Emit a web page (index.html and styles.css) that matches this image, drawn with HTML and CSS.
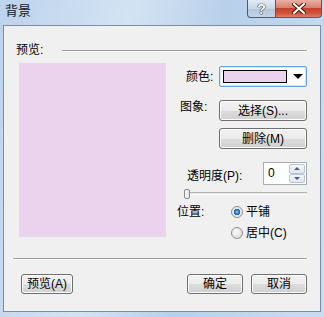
FILE: index.html
```html
<!doctype html>
<html lang="zh-CN">
<head>
    <meta charset="UTF-8">
    <title>背景</title>
    <link rel="stylesheet" href="styles.css">
</head>
<body>
    <div class="window">
        <div class="titlebar">
            <span class="title">背景</span>
            <div class="caption">
                <div class="cap help">?</div>
                <div class="cap close">
                    <svg width="14" height="11" viewBox="0 0 14 11">
                        <path d="M2 1 L12 10 M12 1 L2 10" stroke="#4a1a14" stroke-width="4" stroke-linecap="square"/>
                        <path d="M2 1 L12 10 M12 1 L2 10" stroke="#fff" stroke-width="2" stroke-linecap="square"/>
                    </svg>
                </div>
            </div>
        </div>

        <div class="client">
            <div class="group-head">
                <span class="group-label">预览:</span>
                <span class="rule"></span>
            </div>

            <div class="main">
                <div class="preview"></div>

                <div class="options">
                    <div class="row row-color">
                        <label class="lbl lbl-color">颜色:</label>
                        <div class="combo">
                            <span class="swatch"></span>
                            <span class="arrow"></span>
                        </div>
                    </div>
                    <div class="row row-image">
                        <label class="lbl lbl-image">图象:</label>
                        <button class="btn btn-wide">选择(S)...</button>
                    </div>
                    <div class="row row-delete">
                        <button class="btn btn-wide">删除(M)</button>
                    </div>
                    <div class="row row-alpha">
                        <label class="lbl lbl-alpha">透明度(P):</label>
                        <div class="spin">
                            <span class="spin-text">0</span>
                            <div class="spin-btns">
                                <span class="spin-btn"><i class="tri up"></i></span>
                                <span class="spin-btn"><i class="tri down"></i></span>
                            </div>
                        </div>
                    </div>
                    <div class="slider">
                        <span class="track"></span>
                        <span class="thumb"></span>
                    </div>
                    <div class="row row-pos">
                        <label class="lbl">位置:</label>
                        <span class="radio checked"></span>
                        <span class="radio-text">平铺</span>
                    </div>
                    <div class="row row-pos2">
                        <span class="radio"></span>
                        <span class="radio-text">居中(C)</span>
                    </div>
                </div>
            </div>

            <div class="rule bottom-rule"></div>

            <div class="footer">
                <button class="btn btn-foot">预览(A)</button>
                <div class="footer-right">
                    <button class="btn btn-foot">确定</button>
                    <button class="btn btn-foot">取消</button>
                </div>
            </div>
        </div>
    </div>
</body>
</html>
```

FILE: styles.css
```css
* {
    margin: 0;
    padding: 0;
    box-sizing: border-box;
}
body {
    font-family: "Liberation Sans", "Noto Sans CJK SC", sans-serif;
    font-size: 12px;
    color: #000;
    width: 324px;
    height: 317px;
    overflow: hidden;
}
.window {
    width: 324px;
    height: 317px;
    background: linear-gradient(100deg, #bdd3ec 0%, #d3e3f4 35%, #b9d0ea 60%, #cadcf1 100%);
    padding: 0 3px;
    display: flex;
    flex-direction: column;
}
.titlebar {
    height: 25px;
    display: flex;
    justify-content: space-between;
    align-items: flex-start;
}
.title {
    font-size: 13px;
    margin: 3px 0 0 2px;
    line-height: 16px;
    color: #1a1a1a;
}
.caption {
    display: flex;
    margin-right: -1px;
}
.cap {
    height: 18px;
    display: flex;
    align-items: center;
    justify-content: center;
    border: 1px solid #4b5b70;
    border-top: none;
}
.help {
    width: 29px;
    border-radius: 0 0 0 4px;
    background: linear-gradient(#e2eaf4 0%, #c9d6e6 50%, #b3c4d9 51%, #c4d5e8 100%);
    color: #fff;
    font-weight: bold;
    font-size: 14px;
    text-shadow: 0 0 1px #2a3a50, 0 0 1px #2a3a50, 0 0 1px #2a3a50;
}
.close {
    width: 46px;
    border-left: none;
    border-radius: 0 0 4px 0;
    background: linear-gradient(#eab0a4 0%, #d8806e 45%, #c4412d 50%, #d2553d 80%, #e0806a 100%);
}
.client {
    flex: 1;
    background: #f0f0f0;
    border: 1px solid #7d8d9f;
    margin-bottom: 5px;
    padding: 0 13px 0 0;
}
.group-head {
    display: flex;
    align-items: center;
    height: 16px;
    margin-top: 16px;
    padding-left: 12px;
}
.group-label {
    width: 46px;
    line-height: 16px;
}
.rule {
    display: block;
    height: 2px;
    border-top: 1px solid #a0a0a0;
    border-bottom: 1px solid #fff;
}
.group-head .rule {
    flex: 1;
    margin-top: 1px;
}
.main {
    display: flex;
    margin-top: 5px;
    padding-left: 15px;
    height: 175px;
}
.preview {
    width: 147px;
    height: 174px;
    background: #ebd2ed;
}
.options {
    flex: 1;
    margin-left: 11px;
    display: flex;
    flex-direction: column;
}
.row {
    display: flex;
    align-items: center;
}
.lbl {
    line-height: 16px;
}
.row-color {
    height: 21px;
    margin-top: 3px;
    justify-content: space-between;
}
.lbl-color {
    margin-left: 9px;
}
.combo {
    width: 88px;
    height: 21px;
    border: 1px solid #5fa5e8;
    border-radius: 2px;
    background: #fff;
    box-shadow: inset 0 0 0 1px #d3e6f8;
    display: flex;
    align-items: center;
    padding: 0 3px;
}
.swatch {
    width: 68px;
    height: 13px;
    border: 1px solid #000;
    background: #ebd2ed;
}
.arrow {
    margin-left: 6px;
    width: 0;
    height: 0;
    border-left: 5px solid transparent;
    border-right: 5px solid transparent;
    border-top: 5px solid #000;
}
.row-image {
    margin-top: 13px;
    justify-content: space-between;
}
.lbl-image {
    margin-left: 3px;
    margin-top: -8px;
}
.row-delete {
    margin-top: 7px;
    justify-content: flex-end;
}
.btn {
    font-family: "Liberation Sans", "Noto Sans CJK SC", sans-serif;
    font-size: 12px;
    height: 21px;
    border: 1px solid #707070;
    border-radius: 3px;
    background: linear-gradient(#f2f2f2 0%, #ebebeb 50%, #dddddd 51%, #cfcfcf 100%);
    box-shadow: inset 0 0 0 1px #fcfcfc;
    color: #000;
    line-height: 18px;
}
.btn-wide {
    width: 88px;
}
.row-alpha {
    margin-top: 13px;
    height: 23px;
    justify-content: space-between;
}
.lbl-alpha {
    margin-left: 10px;
    margin-top: 4px;
}
.spin {
    width: 44px;
    height: 23px;
    border: 1px solid #abadb3;
    border-top-color: #abadb3;
    background: #fff;
    display: flex;
    justify-content: space-between;
    padding: 1px;
}
.spin-text {
    margin-left: 3px;
    line-height: 18px;
}
.spin-btns {
    display: flex;
    flex-direction: column;
    width: 16px;
}
.spin-btn {
    flex: 1;
    border: 1px solid #b8c4d4;
    border-radius: 2px;
    background: linear-gradient(#f4f7fb, #dfe6ef);
    display: flex;
    align-items: center;
    justify-content: center;
}
.tri {
    width: 0;
    height: 0;
    border-left: 3px solid transparent;
    border-right: 3px solid transparent;
}
.tri.up {
    border-bottom: 3px solid #4a5f7a;
}
.tri.down {
    border-top: 3px solid #4a5f7a;
}
.slider {
    position: relative;
    height: 10px;
    margin-top: 4px;
    margin-left: 7px;
}
.track {
    display: block;
    height: 3px;
    margin-top: 3px;
    border-top: 1px solid #b5b5b5;
    border-bottom: 1px solid #fff;
    background: #e6e6e6;
}
.thumb {
    position: absolute;
    left: 0;
    top: 0;
    width: 6px;
    height: 10px;
    border: 1px solid #8a8a8a;
    border-radius: 2px;
    background: linear-gradient(90deg, #fdfdfd, #e0e0e0);
}
.row-pos {
    margin-top: 9px;
    height: 16px;
}
.row-pos .lbl {
    width: 54px;
}
.row-pos2 {
    margin-top: 5px;
    height: 16px;
    padding-left: 54px;
}
.radio {
    width: 12px;
    height: 12px;
    border-radius: 50%;
    border: 1px solid #8e8f8f;
    background: radial-gradient(circle at 40% 35%, #fafafa 0%, #e0e0e0 70%, #cfcfcf 100%);
}
.radio.checked {
    background: radial-gradient(circle, #7fc4f5 0%, #2b87d8 28%, #17589c 42%, #e4e4e4 46%, #f6f6f6 100%);
}
.radio-text {
    margin-left: 3px;
    line-height: 16px;
}
.bottom-rule {
    margin: 20px 0 0 9px;
}
.footer {
    display: flex;
    justify-content: space-between;
    margin-top: 14px;
    padding-left: 17px;
}
.footer-right {
    display: flex;
    gap: 8px;
}
.btn-foot {
    width: 56px;
    height: 20px;
}
.footer > .btn-foot {
    width: 52px;
}
```
